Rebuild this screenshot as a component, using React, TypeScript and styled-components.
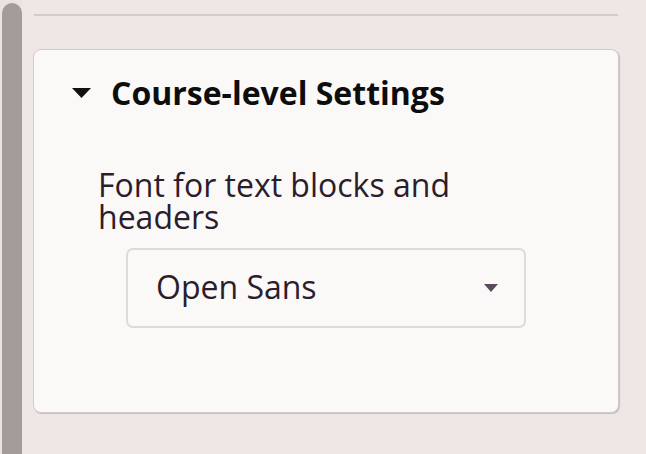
import React from "react";
import styled, { createGlobalStyle } from "styled-components";

const Global = createGlobalStyle`
  html, body { margin: 0; padding: 0; }
  body {
    background: #efe7e6;
    font-family: "Open Sans", "Noto Sans", sans-serif;
    width: 646px;
    height: 454px;
    overflow: hidden;
  }
`;

const Page = styled.div`
  display: grid;
  grid-template-columns: 22px 1fr;
  height: 454px;
`;

const Track = styled.div`
  display: flex;
  flex-direction: column;
  padding: 3px 0 0 2px;
  background: #ebe3e2;
`;

const Thumb = styled.div`
  flex: 1;
  background: #a29c9b;
  border-radius: 10px 10px 0 0;
`;

const Main = styled.div`
  display: flex;
  flex-direction: column;
  padding: 14px 27px 0 11px;
`;

const Divider = styled.hr`
  margin: 0 1px;
  border: none;
  height: 2px;
  background: #d3cbcb;
`;

const Card = styled.section`
  margin-top: 33px;
  height: 364px;
  background: #faf9f8;
  border: 1px solid #d2cbca;
  border-radius: 8px;
  box-shadow: 1px 1px 1px #c4bebd;
  padding: 21px 0 0 38px;
  box-sizing: border-box;
`;

const Summary = styled.div`
  display: flex;
  align-items: center;
  gap: 20px;
  height: 44px;
`;

const Caret = styled.svg`
  width: 19px;
  height: 10px;
  flex: none;
`;

const Title = styled.h2`
  margin: 0;
  font-size: 32px;
  line-height: 44px;
  font-weight: 700;
  color: #0d0d0d;
`;

const Field = styled.div`
  display: flex;
  flex-direction: column;
  padding: 54px 0 0 26px;
`;

const Label = styled.label`
  font-size: 32px;
  line-height: 32px;
  color: #2b1d2b;
  width: 440px;
`;

const Select = styled.div`
  margin: 15px 0 0 28px;
  width: 400px;
  height: 80px;
  box-sizing: border-box;
  border: 2px solid #dedad9;
  border-radius: 7px;
  display: flex;
  align-items: center;
  justify-content: space-between;
  padding: 0 26px 2px 28px;
  font-size: 32px;
  line-height: 1;
  color: #2b1d2b;
`;

const Arrow = styled.svg`
  width: 14px;
  height: 8px;
  margin-top: 1px;
`;

export default function App() {
  return (
    <>
      <Global />
      <Page>
        <Track>
          <Thumb />
        </Track>
        <Main>
          <Divider />
          <Card>
            <Summary>
              <Caret viewBox="0 0 19 10">
                <path d="M0 0 H19 L9.5 10 Z" fill="#111" />
              </Caret>
              <Title>Course-level Settings</Title>
            </Summary>
            <Field>
              <Label>Font for text blocks and headers</Label>
              <Select>
                <span>Open Sans</span>
                <Arrow viewBox="0 0 14 8">
                  <path d="M0 0 H14 L7 8 Z" fill="#5a4a5a" />
                </Arrow>
              </Select>
            </Field>
          </Card>
        </Main>
      </Page>
    </>
  );
}
